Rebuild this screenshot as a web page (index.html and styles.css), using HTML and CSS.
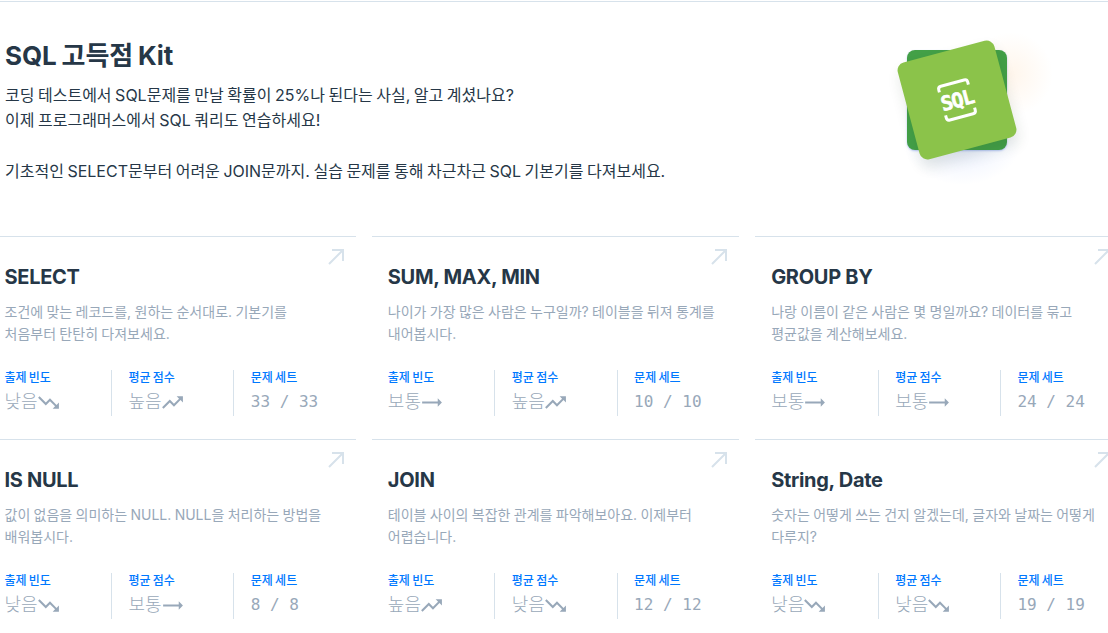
FILE: index.html
```html
<!DOCTYPE html>
<html lang="ko">
<head>
<meta charset="utf-8">
<title>SQL 고득점 Kit</title>
<link rel="stylesheet" href="styles.css">
</head>
<body>
<svg class="defs" width="0" height="0" aria-hidden="true">
  <symbol id="up" viewBox="0 0 24 24"><path d="M16 6l2.29 2.29-4.88 4.88-4-4L2 16.59 3.41 18l6-6 4 4 6.3-6.29L22 12V6z"/></symbol>
  <symbol id="down" viewBox="0 0 24 24"><path d="M16 18l2.29-2.29-4.88-4.88-4 4L2 7.41 3.41 6l6 6 4-4 6.3 6.29L22 12v6z"/></symbol>
  <symbol id="flat" viewBox="0 0 24 24"><path d="M22 12l-4-4v3H3v2h15v3z"/></symbol>
  <symbol id="go" viewBox="0 0 16 16"><path d="M1 15L15 1M4 1h11v11" fill="none" stroke="currentColor" stroke-width="2"/></symbol>
</svg>
<main class="page">
  <header class="hero">
    <div class="hero-text">
      <h1>SQL 고득점 Kit</h1>
      <p>코딩 테스트에서 SQL문제를 만날 확률이 25%나 된다는 사실, 알고 계셨나요?<br>이제 프로그래머스에서 SQL 쿼리도 연습하세요!<br><br>기초적인 SELECT문부터 어려운 JOIN문까지. 실습 문제를 통해 차근차근 SQL 기본기를 다져보세요.</p>
    </div>
    <div class="logo">
      <div class="glow-orange"></div>
      <div class="glow-blue"></div>
      <div class="logo-back"></div>
      <div class="logo-front">
        <svg class="logo-mark" viewBox="0 0 36 42" width="36" height="42">
          <path d="M3 9V6.5q0-3 3-3h24q3 0 3 3V9M3 33v2.5q0 3 3 3h24q3 0 3-3V33" fill="none" stroke="#fff" stroke-width="3"/>
          <text x="18" y="28.3" text-anchor="middle" class="logo-text">SQL</text>
        </svg>
      </div>
    </div>
  </header>
  <section class="grid">
    <article class="card">
      <svg class="go"><use href="#go"/></svg>
      <h2>SELECT</h2>
      <p class="desc">조건에 맞는 레코드를, 원하는 순서대로. 기본기를<br>처음부터 탄탄히 다져보세요.</p>
      <div class="stats">
        <div class="stat"><span class="label">출제 빈도</span><span class="value">낮음<svg class="trend"><use href="#down"/></svg></span></div>
        <div class="stat"><span class="label">평균 점수</span><span class="value">높음<svg class="trend"><use href="#up"/></svg></span></div>
        <div class="stat"><span class="label">문제 세트</span><span class="value mono">33 / 33</span></div>
      </div>
    </article>
    <article class="card">
      <svg class="go"><use href="#go"/></svg>
      <h2>SUM, MAX, MIN</h2>
      <p class="desc">나이가 가장 많은 사람은 누구일까? 테이블을 뒤져 통계를<br>내어봅시다.</p>
      <div class="stats">
        <div class="stat"><span class="label">출제 빈도</span><span class="value">보통<svg class="trend"><use href="#flat"/></svg></span></div>
        <div class="stat"><span class="label">평균 점수</span><span class="value">높음<svg class="trend"><use href="#up"/></svg></span></div>
        <div class="stat"><span class="label">문제 세트</span><span class="value mono">10 / 10</span></div>
      </div>
    </article>
    <article class="card">
      <svg class="go"><use href="#go"/></svg>
      <h2>GROUP BY</h2>
      <p class="desc">나랑 이름이 같은 사람은 몇 명일까요? 데이터를 묶고<br>평균값을 계산해보세요.</p>
      <div class="stats">
        <div class="stat"><span class="label">출제 빈도</span><span class="value">보통<svg class="trend"><use href="#flat"/></svg></span></div>
        <div class="stat"><span class="label">평균 점수</span><span class="value">보통<svg class="trend"><use href="#flat"/></svg></span></div>
        <div class="stat"><span class="label">문제 세트</span><span class="value mono">24 / 24</span></div>
      </div>
    </article>
    <article class="card">
      <svg class="go"><use href="#go"/></svg>
      <h2>IS NULL</h2>
      <p class="desc">값이 없음을 의미하는 NULL. NULL을 처리하는 방법을<br>배워봅시다.</p>
      <div class="stats">
        <div class="stat"><span class="label">출제 빈도</span><span class="value">낮음<svg class="trend"><use href="#down"/></svg></span></div>
        <div class="stat"><span class="label">평균 점수</span><span class="value">보통<svg class="trend"><use href="#flat"/></svg></span></div>
        <div class="stat"><span class="label">문제 세트</span><span class="value mono">8 / 8</span></div>
      </div>
    </article>
    <article class="card">
      <svg class="go"><use href="#go"/></svg>
      <h2>JOIN</h2>
      <p class="desc">테이블 사이의 복잡한 관계를 파악해보아요. 이제부터<br>어렵습니다.</p>
      <div class="stats">
        <div class="stat"><span class="label">출제 빈도</span><span class="value">높음<svg class="trend"><use href="#up"/></svg></span></div>
        <div class="stat"><span class="label">평균 점수</span><span class="value">낮음<svg class="trend"><use href="#down"/></svg></span></div>
        <div class="stat"><span class="label">문제 세트</span><span class="value mono">12 / 12</span></div>
      </div>
    </article>
    <article class="card">
      <svg class="go"><use href="#go"/></svg>
      <h2>String, Date</h2>
      <p class="desc">숫자는 어떻게 쓰는 건지 알겠는데, 글자와 날짜는 어떻게<br>다루지?</p>
      <div class="stats">
        <div class="stat"><span class="label">출제 빈도</span><span class="value">낮음<svg class="trend"><use href="#down"/></svg></span></div>
        <div class="stat"><span class="label">평균 점수</span><span class="value">낮음<svg class="trend"><use href="#down"/></svg></span></div>
        <div class="stat"><span class="label">문제 세트</span><span class="value mono">19 / 19</span></div>
      </div>
    </article>
  </section>
</main>
</body>
</html>
```
FILE: styles.css
```css
* { box-sizing: border-box; }
html, body { margin: 0; height: 633px; overflow: hidden; background: #fff; }
body { font-family: Inter, "Noto Sans CJK KR", sans-serif; color: #263747; word-spacing: -0.06em; }
.defs { position: absolute; }
.page { border-top: 1px solid #d7e2eb; margin-top: 1px; height: 632px; overflow: hidden; }
.hero { display: flex; justify-content: space-between; padding: 36px 0 0 5px; height: 234px; }
.hero h1 { margin: 0 0 8.6px; font-size: 26px; line-height: 36px; font-weight: 700; letter-spacing: -0.005em; }
.hero p { margin: 0; font-size: 16px; line-height: 25.6px; font-weight: 400; }
.logo { position: relative; flex: none; width: 100px; height: 100px; margin: 12px 101px 0 0; }
.logo-back { position: absolute; inset: 0; border-radius: 8px; background: #43a047; box-shadow: 0 1px 2px rgba(80,120,230,.4); }
.logo-front { position: absolute; inset: 0; border-radius: 8px; background: #8bc34a; transform: rotate(-15deg); display: flex; align-items: center; justify-content: center; box-shadow: 0 8px 14px rgba(30,60,30,.12); }
.logo-mark { display: block; }
.logo-text { font-family: "DejaVu Sans Mono", monospace; font-size: 20px; font-weight: 700; letter-spacing: -1px; fill: #fff; stroke: #fff; stroke-width: .6px; }
.glow-orange { position: absolute; left: 62px; top: -18px; width: 84px; height: 84px; border-radius: 50%; background: radial-gradient(closest-side, rgba(255,190,120,.14), rgba(255,190,120,0)); }
.glow-blue { position: absolute; left: -5px; top: 45px; width: 120px; height: 90px; border-radius: 50%; background: radial-gradient(closest-side, rgba(110,150,255,.16), rgba(110,150,255,0)); }
.grid { display: grid; grid-template-columns: repeat(3, 367.33px); column-gap: 16px; margin-left: -11.5px; width: 1140px; }
.card { position: relative; border-top: 1px solid #d7e2eb; height: 203px; padding: 28px 16px 0; }
.card h2 { margin: 0 0 12px; font-size: 20px; line-height: 24px; font-weight: 700; letter-spacing: -0.015em; word-spacing: 0; }
.desc { margin: 0 0 24px; font-size: 14px; line-height: 22.4px; color: #98a8b9; white-space: nowrap; word-spacing: -0.042em; }
.go { position: absolute; top: 12px; right: 12px; width: 16px; height: 16px; color: #d7e2eb; }
.stats { display: grid; grid-template-columns: 106.6px 122.3px 1fr; height: 46px; }
.stat { display: flex; flex-direction: column; padding-left: 16.4px; border-left: 1px solid #d7e2eb; }
.stat:first-child { padding-left: 0; border-left: 0; }
.label { font-size: 12px; line-height: 16px; font-weight: 500; color: #0078ff; margin-bottom: 4px; }
.value { display: flex; align-items: center; font-size: 18px; line-height: 24px; font-weight: 300; color: #98a8b9; }
.mono { font-family: "DejaVu Sans Mono", monospace; font-size: 16px; font-weight: 400; word-spacing: 0; }
.trend { width: 25px; height: 25px; flex: none; fill: #98a8b9; margin-left: -2px; }
```
